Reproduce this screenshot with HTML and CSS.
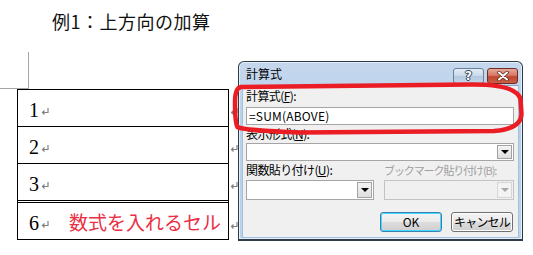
FILE: index.html
```html
<!DOCTYPE html>
<html lang="ja">
<head>
<meta charset="utf-8">
<title>例1：上方向の加算</title>
<link rel="stylesheet" href="styles.css">
</head>
<body>
<div class="page">
  <h1 class="heading">例1：上方向の加算</h1>
  <div class="doc">
    <div class="corner"></div>
    <div class="table-area">
      <div class="cells">
        <div class="cell"><span class="num">1</span><svg class="ret" viewBox="0 0 8 7"><path d="M7 0V4.5H1.5M3.5 2.5L1.5 4.5L3.5 6.5"/></svg></div>
        <div class="cell"><span class="num">2</span><svg class="ret" viewBox="0 0 8 7"><path d="M7 0V4.5H1.5M3.5 2.5L1.5 4.5L3.5 6.5"/></svg></div>
        <div class="cell"><span class="num">3</span><svg class="ret" viewBox="0 0 8 7"><path d="M7 0V4.5H1.5M3.5 2.5L1.5 4.5L3.5 6.5"/></svg></div>
        <div class="cell cell-total"><span class="num">6</span><svg class="ret" viewBox="0 0 8 7"><path d="M7 0V4.5H1.5M3.5 2.5L1.5 4.5L3.5 6.5"/></svg><span class="note">数式を入れるセル</span></div>
      </div>
      <div class="row-ends">
        <div class="end"><svg class="ret" viewBox="0 0 8 7"><path d="M7 0V4.5H1.5M3.5 2.5L1.5 4.5L3.5 6.5"/></svg></div>
        <div class="end"><svg class="ret" viewBox="0 0 8 7"><path d="M7 0V4.5H1.5M3.5 2.5L1.5 4.5L3.5 6.5"/></svg></div>
        <div class="end"><svg class="ret" viewBox="0 0 8 7"><path d="M7 0V4.5H1.5M3.5 2.5L1.5 4.5L3.5 6.5"/></svg></div>
        <div class="end end-total"><svg class="ret" viewBox="0 0 8 7"><path d="M7 0V4.5H1.5M3.5 2.5L1.5 4.5L3.5 6.5"/></svg></div>
      </div>
    </div>
  </div>

  <div class="dialog">
    <div class="titlebar">
      <span class="title">計算式</span>
      <div class="caption-buttons">
        <div class="cap-btn help"><span class="help-glyph">?</span></div>
        <div class="cap-btn close"><svg class="close-glyph" viewBox="0 0 14 10"><path class="x-out" d="M3 1.5L11 8.5M11 1.5L3 8.5"/><path class="x-in" d="M3 1.5L11 8.5M11 1.5L3 8.5"/></svg></div>
      </div>
    </div>
    <div class="client">
      <div class="label">計算式(<u>F</u>):</div>
      <div class="textbox">=SUM(ABOVE)</div>
      <div class="label label-2">表示形式(<u>N</u>):</div>
      <div class="combo combo-wide"><div class="drop"><span class="tri"></span></div></div>
      <div class="label label-3 pair">
        <span class="pair-left">関数貼り付け(<u>U</u>):</span>
        <span class="pair-right disabled">ブックマーク貼り付け(B):</span>
      </div>
      <div class="pair combos">
        <div class="combo combo-left"><div class="drop"><span class="tri"></span></div></div>
        <div class="combo combo-right disabled-combo"><div class="drop drop-disabled"><span class="tri tri-disabled"></span></div></div>
      </div>
      <div class="buttons">
        <div class="btn btn-default">OK</div>
        <div class="btn btn-cancel">キャンセル</div>
      </div>
    </div>
  </div>

  <svg class="highlight" viewBox="0 0 533 255">
    <path d="M241 87 L470 84.5 Q516 84 520.5 99 L521.5 114 Q521 129 494 131 L300 132.5 Q243 130.5 237.5 127 Q235 123 235 102 Q235 88 241 87 Z"/>
  </svg>
</div>
</body>
</html>
```

FILE: styles.css
```css
* { box-sizing: border-box; }

html, body {
  margin: 0;
  padding: 0;
  background: #ffffff;
}

.page {
  position: relative;
  width: 533px;
  height: 255px;
  overflow: hidden;
  font-family: "Noto Sans CJK JP", "Noto Sans", sans-serif;
}

.heading {
  margin: 0;
  padding: 8px 0 0 52px;
  font-family: "Noto Sans CJK JP", sans-serif;
  font-size: 18px;
  font-weight: normal;
  line-height: 26px;
  color: #111;
  letter-spacing: 0.5px;
}

.doc {
  display: flex;
  flex-direction: column;
}

.corner {
  margin-top: 18px;
  width: 29px;
  height: 37px;
  border-right: 1px solid #a6a6a6;
  border-bottom: 1px solid #a6a6a6;
}

.table-area {
  display: flex;
  margin-left: 17px;
}

.cells {
  width: 212px;
  border: 1px solid #000;
  display: flex;
  flex-direction: column;
}

.cell {
  height: 37px;
  border-top: 1px solid #000;
  display: flex;
  align-items: center;
  padding-left: 11px;
  padding-top: 4px;
}

.cell:first-child {
  height: 36px;
  border-top: none;
}

.cell-total {
  height: 39px;
  border-top: 3px double #000;
}

.num {
  font-family: "Liberation Serif", "DejaVu Serif", serif;
  font-size: 20px;
  line-height: 20px;
  color: #000;
}

.ret {
  width: 8px;
  height: 7px;
  margin-left: 2px;
  margin-top: 3px;
  flex: none;
}

.ret path {
  fill: none;
  stroke: #808080;
  stroke-width: 1.2;
}

.note {
  margin-left: 20px;
  font-family: "Noto Sans CJK JP", sans-serif;
  font-size: 19px;
  line-height: 20px;
  color: #ea2f45;
  margin-top: -3px;
}

.row-ends {
  display: flex;
  flex-direction: column;
  padding-top: 1px;
}

.end {
  height: 37px;
  display: flex;
  align-items: center;
  padding-top: 2px;
}

.end-total {
  height: 39px;
  padding-top: 6px;
}

.end .ret {
  margin-left: 1px;
}

/* Dialog window */
.dialog {
  position: absolute;
  left: 238px;
  top: 61px;
  width: 285px;
  height: 180px;
  border: 1px solid #2f3a45;
  border-bottom-width: 2px;
  border-radius: 6px 6px 0 0;
  background: linear-gradient(#c4d7ed, #b9cfe8 40%, #bcd2ea);
  padding: 0 3px 1px 3px;
  display: flex;
  flex-direction: column;
  font-size: 12px;
  color: #000;
  box-shadow: inset 0 0 0 1px #e4eef9;
}

.titlebar {
  height: 23px;
  display: flex;
  align-items: center;
  justify-content: space-between;
  padding-left: 4px;
  padding-top: 1px;
  flex: none;
}

.title {
  font-size: 12px;
  line-height: 14px;
  color: #000;
}

.caption-buttons {
  display: flex;
  gap: 3px;
  margin-top: 4px;
  margin-right: 1px;
}

.cap-btn {
  width: 31px;
  height: 16px;
  border-radius: 3px;
  display: flex;
  align-items: center;
  justify-content: center;
}

.help {
  border: 1px solid #6a7f98;
  background: linear-gradient(#e3ecf6, #c9d9ea 50%, #b3c8df 51%, #c4d6ea);
}

.help-glyph {
  font-family: "DejaVu Sans", sans-serif;
  font-weight: bold;
  font-size: 12px;
  line-height: 12px;
  color: #ffffff;
  text-shadow: 0 0 1px #33475e, 1px 0 0 #33475e, -1px 0 0 #33475e, 0 1px 0 #33475e, 0 -1px 0 #33475e;
}

.close {
  border: 1px solid #6e2e26;
  background: linear-gradient(#e6a89a, #d47a66 45%, #c1462f 55%, #cc5e46);
}

.close-glyph {
  width: 14px;
  height: 10px;
}

.x-out {
  stroke: #5a2a22;
  stroke-width: 3.6;
  stroke-linecap: round;
  fill: none;
}

.x-in {
  stroke: #ffffff;
  stroke-width: 2;
  stroke-linecap: round;
  fill: none;
}

.client {
  flex: 1;
  background: #f0f0f0;
  border: 1px solid #9fc1e2;
  border-top-color: #8aa6c4;
  padding: 3px 4px 0 3px;
  display: flex;
  flex-direction: column;
}

.label {
  font-size: 12px;
  line-height: 14px;
  height: 14px;
  color: #000;
  white-space: nowrap;
  letter-spacing: -0.6px;
}

.label u {
  text-decoration: underline;
  text-underline-offset: 1px;
}

.textbox {
  margin-top: 4px;
  height: 18px;
  width: 268px;
  background: #fff;
  border: 1px solid #a5a5a5;
  font-size: 12px;
  line-height: 16px;
  padding-left: 2px;
  letter-spacing: 0.2px;
}

.label-2 {
  margin-top: 2px;
}

.combo {
  height: 18px;
  background: #fff;
  border: 1px solid #a5a5a5;
  display: flex;
  justify-content: flex-end;
  align-items: stretch;
  padding: 1px;
}

.combo-wide {
  margin-top: 2px;
  width: 268px;
}

.drop {
  width: 15px;
  border: 1px solid #a3a3a3;
  background: linear-gradient(#f4f4f4, #dedede);
  display: flex;
  align-items: center;
  justify-content: center;
}

.tri {
  width: 0;
  height: 0;
  border-left: 4px solid transparent;
  border-right: 4px solid transparent;
  border-top: 4px solid #000;
}

.label-3 {
  margin-top: 2px;
}

.pair {
  display: flex;
}

.pair-left {
  width: 138px;
  flex: none;
}

.pair-right {
  font-size: 11px;
  letter-spacing: -1.1px;
}

.disabled {
  color: #a0a0a0;
}

.combos {
  margin-top: 3px;
  gap: 10px;
}

.combo-left {
  width: 128px;
  height: 20px;
}

.combo-right {
  width: 130px;
  height: 20px;
}

.disabled-combo {
  background: #f0f0f0;
  border-color: #c3c3c3;
}

.drop-disabled {
  border-color: #d6d6d6;
  background: #f3f3f3;
}

.tri-disabled {
  border-top-color: #a8a8a8;
}

.buttons {
  display: flex;
  justify-content: flex-end;
  gap: 9px;
  margin-top: 12px;
  padding-right: 1px;
}

.btn {
  width: 62px;
  height: 20px;
  border: 1px solid #707070;
  border-radius: 3px;
  background: linear-gradient(#f3f3f3, #ebebeb 50%, #dddddd 51%, #cfcfcf);
  font-size: 12px;
  line-height: 18px;
  text-align: center;
  color: #000;
  box-shadow: inset 0 0 0 1px #fcfcfc;
}

.btn-cancel {
  letter-spacing: -0.8px;
}

.btn-default {
  border-color: #3c7fb1;
  box-shadow: inset 0 0 0 1px #48d8fb;
}

.highlight {
  position: absolute;
  left: 0;
  top: 0;
  width: 533px;
  height: 255px;
  pointer-events: none;
}

.highlight path {
  fill: none;
  stroke: #ea1c24;
  stroke-width: 4.5;
  stroke-linejoin: round;
}
```
